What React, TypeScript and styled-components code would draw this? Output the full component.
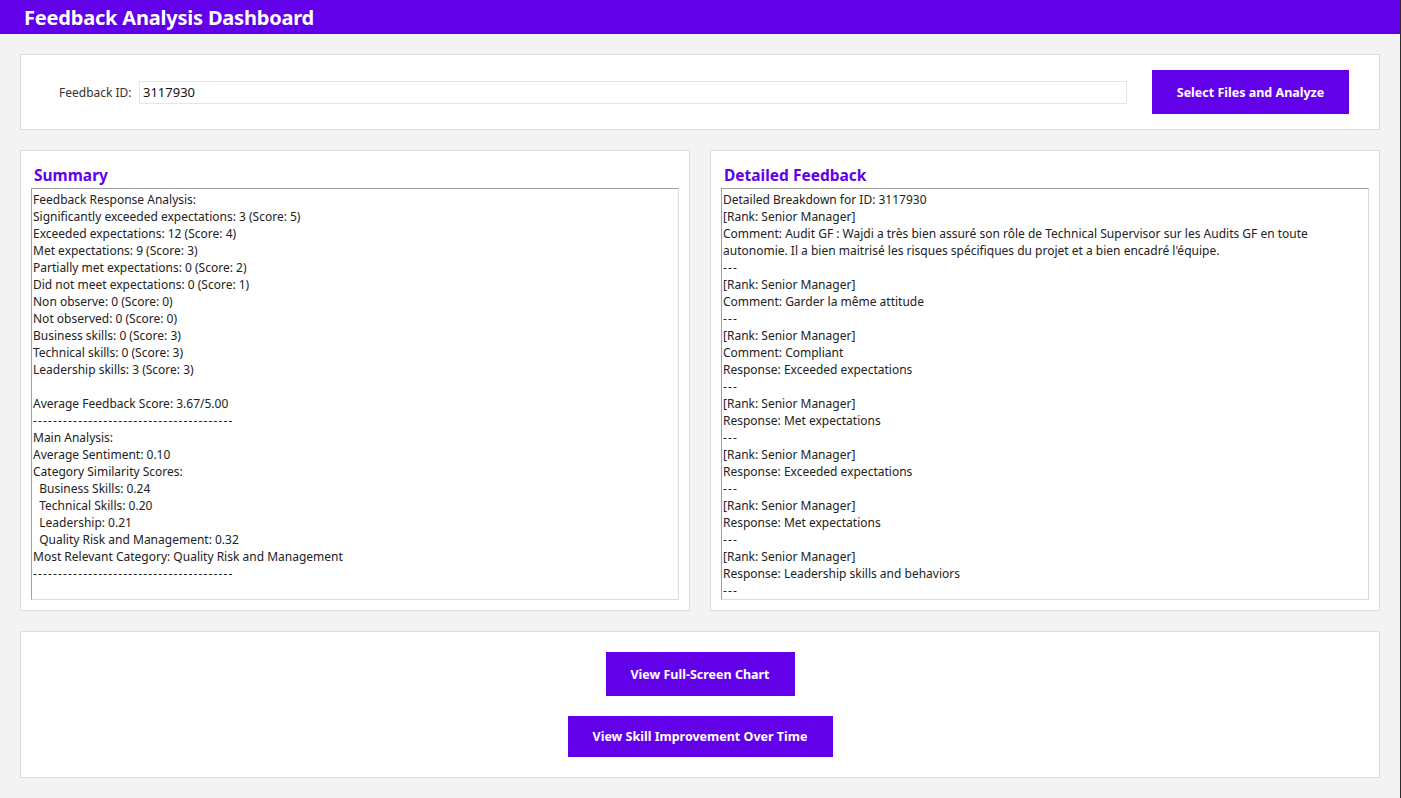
import React, { useState } from 'react';
import styled, { createGlobalStyle } from 'styled-components';

const GlobalStyle = createGlobalStyle`
  html, body {
    margin: 0;
    padding: 0;
    background: #f3f3f3;
  }
  body {
    font-family: 'Noto Sans', 'Open Sans', sans-serif;
    color: #222;
  }
`;

const summaryLines = [
  'Feedback Response Analysis:',
  'Significantly exceeded expectations: 3 (Score: 5)',
  'Exceeded expectations: 12 (Score: 4)',
  'Met expectations: 9 (Score: 3)',
  'Partially met expectations: 0 (Score: 2)',
  'Did not meet expectations: 0 (Score: 1)',
  'Non observe: 0 (Score: 0)',
  'Not observed: 0 (Score: 0)',
  'Business skills: 0 (Score: 3)',
  'Technical skills: 0 (Score: 3)',
  'Leadership skills: 3 (Score: 3)',
  '',
  'Average Feedback Score: 3.67/5.00',
  '----------------------------------------',
  'Main Analysis:',
  'Average Sentiment: 0.10',
  'Category Similarity Scores:',
  '  Business Skills: 0.24',
  '  Technical Skills: 0.20',
  '  Leadership: 0.21',
  '  Quality Risk and Management: 0.32',
  'Most Relevant Category: Quality Risk and Management',
  '----------------------------------------',
];

const detailLines = [
  'Detailed Breakdown for ID: 3117930',
  '[Rank: Senior Manager]',
  'Comment: Audit GF : Wajdi a très bien assuré son rôle de Technical Supervisor sur les Audits GF en toute',
  "autonomie. Il a bien maitrisé les risques spécifiques du projet et a bien encadré l'équipe.",
  '---',
  '[Rank: Senior Manager]',
  'Comment: Garder la même attitude',
  '---',
  '[Rank: Senior Manager]',
  'Comment: Compliant',
  'Response: Exceeded expectations',
  '---',
  '[Rank: Senior Manager]',
  'Response: Met expectations',
  '---',
  '[Rank: Senior Manager]',
  'Response: Exceeded expectations',
  '---',
  '[Rank: Senior Manager]',
  'Response: Met expectations',
  '---',
  '[Rank: Senior Manager]',
  'Response: Leadership skills and behaviors',
  '---',
];

const renderLines = (lines: string[]) =>
  lines.map((line, i) => (
    <Line key={i} $dashes={/^-+$/.test(line)}>
      {line || '\u00a0'}
    </Line>
  ));

const App: React.FC = () => {
  const [feedbackId, setFeedbackId] = useState<string>('3117930');

  return (
    <Page>
      <GlobalStyle />
      <Header>
        <Title>Feedback Analysis Dashboard</Title>
      </Header>

      <Main>
        <Card>
          <InputRow>
            <Label htmlFor="fid">Feedback ID:</Label>
            <IdInput
              id="fid"
              value={feedbackId}
              onChange={(e) => setFeedbackId(e.target.value)}
            />
            <ActionButton type="button" $width={197} $height={44}>
              Select Files and Analyze
            </ActionButton>
          </InputRow>
        </Card>

        <Columns>
          <Panel>
            <PanelTitle>Summary</PanelTitle>
            <TextBox>{renderLines(summaryLines)}</TextBox>
          </Panel>
          <Panel>
            <PanelTitle>Detailed Feedback</PanelTitle>
            <TextBox>{renderLines(detailLines)}</TextBox>
          </Panel>
        </Columns>

        <ButtonCard>
          <ActionButton type="button" $width={189} $height={44}>
            View Full-Screen Chart
          </ActionButton>
          <ActionButton type="button" $width={265} $height={41}>
            View Skill Improvement Over Time
          </ActionButton>
        </ButtonCard>
      </Main>
    </Page>
  );
};

export default App;

const Page = styled.div`
  width: 1400px;
  height: 798px;
  border-right: 1px solid #2b2b2b;
  background: #f3f3f3;
  overflow: hidden;
`;

const Header = styled.header`
  height: 34px;
  background: #6200ea;
  display: flex;
  align-items: center;
  padding-left: 24px;
`;

const Title = styled.h1`
  margin: 0;
  font-size: 20px;
  font-weight: bold;
  color: #fff;
  letter-spacing: -0.2px;
`;

const Main = styled.main`
  display: flex;
  flex-direction: column;
  gap: 20px;
  padding: 20px 20px 0;
`;

const Card = styled.section`
  background: #fff;
  border: 1px solid #dcdcdc;
  box-sizing: border-box;
`;

const InputRow = styled.div`
  height: 74px;
  display: flex;
  align-items: center;
  padding: 0 30px 0 38px;
`;

const Label = styled.label`
  font-size: 12px;
  color: #333;
  width: 80px;
`;

const IdInput = styled.input`
  flex: 1;
  height: 23px;
  box-sizing: border-box;
  border: 1px solid #e6e6e6;
  padding: 0 3px;
  font-family: inherit;
  font-size: 13px;
  color: #111;
  outline: none;
  margin-right: 25px;
`;

const ActionButton = styled.button<{ $width: number; $height: number }>`
  width: ${({ $width }) => $width}px;
  height: ${({ $height }) => $height}px;
  background: #6200ea;
  color: #fff;
  border: none;
  font-family: inherit;
  font-size: 12.5px;
  font-weight: bold;
  cursor: pointer;
  flex-shrink: 0;

  &:hover {
    background: #7324ee;
  }
`;

const Columns = styled.div`
  display: grid;
  grid-template-columns: 1fr 1fr;
  gap: 20px;
`;

const Panel = styled(Card)`
  height: 461px;
  padding: 13px 10px 10px 10px;
  display: flex;
  flex-direction: column;
`;

const PanelTitle = styled.h2`
  margin: 0 0 2px 3px;
  font-size: 15.5px;
  font-weight: bold;
  color: #6200ea;
  line-height: 22px;
`;

const TextBox = styled.div`
  flex: 1;
  min-height: 0;
  border-top: 1px solid #a0a0a0;
  border-left: 1px solid #a0a0a0;
  border-right: 1px solid #dcdcdc;
  border-bottom: 1px solid #dcdcdc;
  padding: 2px 1px;
  font-size: 12px;
  line-height: 17px;
  color: #222;
  overflow: hidden;
`;

const Line = styled.div<{ $dashes: boolean }>`
  white-space: pre;
  letter-spacing: ${({ $dashes }) => ($dashes ? '1.15px' : 'normal')};
`;

const ButtonCard = styled(Card)`
  height: 147px;
  display: flex;
  flex-direction: column;
  align-items: center;
  justify-content: center;
  gap: 20px;
`;
